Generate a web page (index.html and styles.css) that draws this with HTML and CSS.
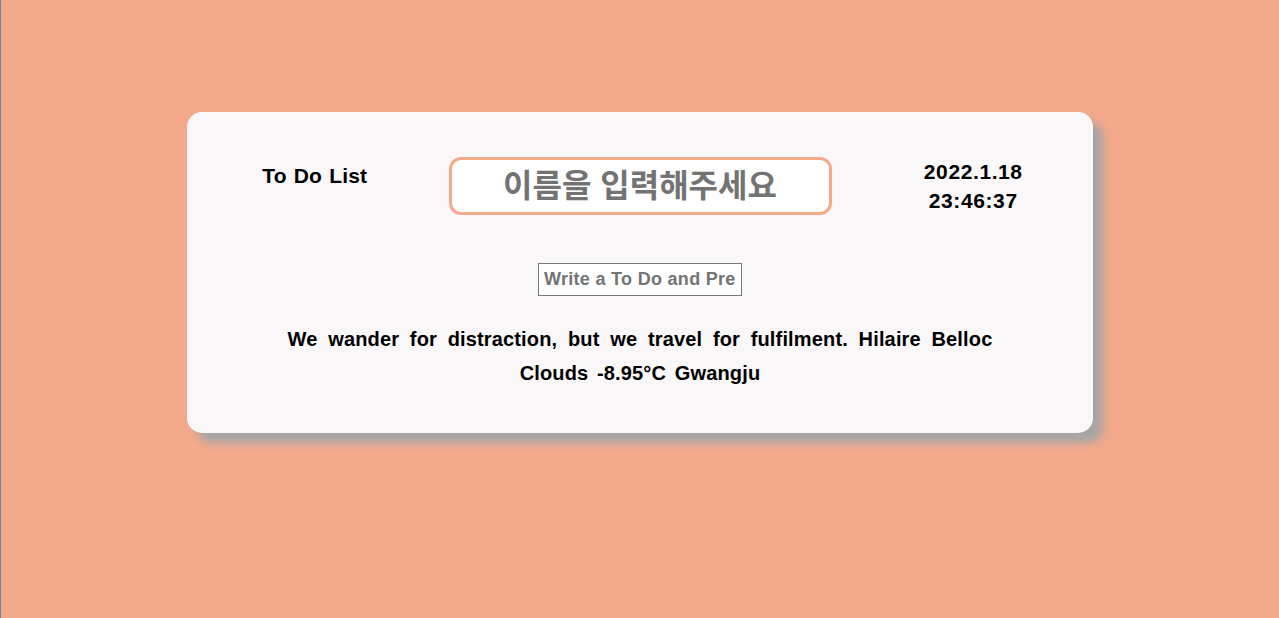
FILE: index.html
```html
<!DOCTYPE html>
<html lang="ko">
<head>
    <meta charset="UTF-8">
    <meta name="viewport" content="width=device-width, initial-scale=1.0">
    <title>To Do List</title>
    <link rel="stylesheet" href="styles.css">
</head>
<body>
    <div class="container">
        <div class="header">
            <h1 class="title">To Do List</h1>
            <input type="text" class="name-input" placeholder="이름을 입력해주세요">
            <div class="clock">
                <div>2022.1.18</div>
                <div>23:46:37</div>
            </div>
        </div>
        <form class="todo-form">
            <input type="text" class="todo-input" placeholder="Write a To Do and Press Enter">
        </form>
        <div class="quote">We wander for distraction, but we travel for fulfilment. Hilaire Belloc</div>
        <div class="weather">Clouds -8.95°C Gwangju</div>
    </div>
</body>
</html>
```

FILE: styles.css
```css
html {
    border-left: 1px solid #6f86b5;
}
body {
    margin: 0;
    height: 618px;
    background-color: #f4a98b;
    font-family: "Liberation Sans", "Noto Sans CJK KR", sans-serif;
    font-weight: bold;
    padding-top: 112px;
    box-sizing: border-box;
}
.container {
    width: 906px;
    height: 321px;
    margin: 0 auto;
    background: #f9f7f8;
    border-radius: 15px;
    box-shadow: 10px 10px 10px #a5a5a5;
    padding-top: 45px;
    box-sizing: border-box;
    text-align: center;
}
.header {
    display: grid;
    grid-template-columns: 1fr auto 1fr;
    align-items: center;
}
.title {
    margin: 0;
    align-self: start;
    padding-top: 7px;
    padding-right: 6px;
    font-size: 21px;
    letter-spacing: 0.2px;
    word-spacing: 1px;
    color: #000;
}
.name-input {
    width: 383px;
    height: 58px;
    box-sizing: border-box;
    border: 3px solid #f4a98b;
    border-radius: 12px;
    background: #fff;
    font-family: inherit;
    font-size: 32px;
    font-weight: bold;
    text-align: center;
    outline: none;
}
.name-input::placeholder {
    color: #737373;
}
.clock {
    font-size: 21px;
    letter-spacing: 0.6px;
    line-height: 29px;
    color: #000;
    padding-left: 22px;
}
.todo-form {
    margin: 48px 0 0;
}
.todo-input {
    width: 204px;
    height: 33px;
    box-sizing: border-box;
    border: 1px solid #767676;
    background: #fff;
    font-family: inherit;
    font-size: 18px;
    font-weight: bold;
    letter-spacing: 0.3px;
    padding: 0 5px;
}
.todo-input::placeholder {
    color: #737373;
}
.quote {
    margin-top: 26px;
    font-size: 20px;
    letter-spacing: 0.15px;
    word-spacing: 5px;
    line-height: 34px;
}
.weather {
    font-size: 20px;
    letter-spacing: 0.15px;
    word-spacing: 3px;
    line-height: 34px;
}
```
